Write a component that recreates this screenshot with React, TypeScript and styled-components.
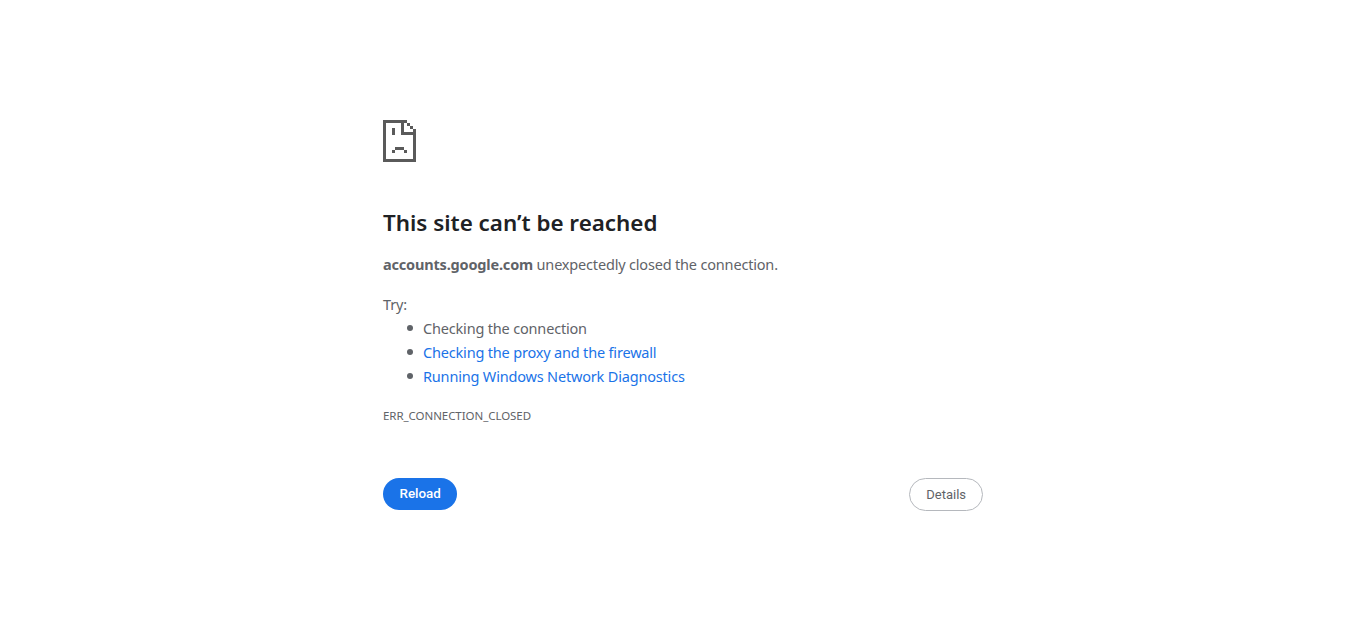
import React from "react";
import styled, { createGlobalStyle } from "styled-components";

const GlobalStyle = createGlobalStyle`
  html, body {
    margin: 0;
    padding: 0;
    background: #fff;
  }
`;

const Page = styled.div`
  box-sizing: border-box;
  width: 600px;
  margin: 0 auto;
  padding-top: 120px;
  font-family: "Noto Sans", "Open Sans", sans-serif;
  font-size: 14.5px;
  color: #5f6368;
`;

const FileIcon = styled.svg`
  display: block;
  width: 33px;
  height: 42px;
`;

const Title = styled.h1`
  margin: 47px 0 0;
  font-size: 22.4px;
  font-weight: 600;
  line-height: 28px;
  color: #202124;
`;

const Summary = styled.p`
  margin: 15px 0 0;
  line-height: 24px;
  letter-spacing: -0.18px;

  b {
    font-weight: 700;
  }
`;

const TryLabel = styled.p`
  margin: 16px 0 0;
  line-height: 24px;
  letter-spacing: -0.18px;
`;

const Suggestions = styled.ul`
  margin: 0;
  padding: 0 0 0 40px;
  list-style: none;
`;

const Suggestion = styled.li<{ $link?: boolean }>`
  position: relative;
  line-height: 24px;
  letter-spacing: -0.18px;
  color: ${(p) => (p.$link ? "#1a73e8" : "#5f6368")};

  &::before {
    content: "";
    position: absolute;
    left: -16px;
    top: 9px;
    width: 6px;
    height: 6px;
    border-radius: 50%;
    background: #5f6368;
  }
`;

const ErrorCode = styled.div`
  margin-top: 20px;
  font-size: 11.5px;
  line-height: 16px;
  letter-spacing: -0.06px;
`;

const Buttons = styled.div`
  display: flex;
  justify-content: space-between;
  align-items: flex-start;
  margin-top: 54px;
`;

const Button = styled.button`
  border-radius: 17px;
  font-family: Roboto, sans-serif;
`;

const ReloadButton = styled(Button)`
  height: 32px;
  padding: 0 16.5px 2px;
  border: 0;
  background: #1a73e8;
  color: #fff;
  font-size: 13.4px;
  font-weight: 500;
`;

const DetailsButton = styled(Button)`
  height: 33px;
  padding: 0 16px;
  border: 1px solid #b5b8bd;
  background: #fff;
  color: #5f6368;
  font-size: 13px;
  font-weight: 400;
`;

// pixel-art sad page, drawn on a 3px grid
function SadPage() {
  return (
    <FileIcon viewBox="0 0 33 42" fill="#5a5a5a" shapeRendering="crispEdges">
      <rect x="0" y="0" width="24" height="3" />
      <rect x="0" y="0" width="3" height="42" />
      <rect x="0" y="39" width="33" height="3" />
      <rect x="30" y="9" width="3" height="33" />
      <rect x="24" y="3" width="3" height="3" />
      <rect x="27" y="6" width="3" height="3" />
      <rect x="18" y="0" width="3" height="15" />
      <rect x="18" y="12" width="15" height="3" />
      <rect x="9" y="8" width="3" height="7" />
      <rect x="12" y="27" width="9" height="3" />
      <rect x="9" y="30" width="3" height="3" />
      <rect x="21" y="30" width="3" height="3" />
    </FileIcon>
  );
}

export default function App() {
  return (
    <Page>
      <GlobalStyle />
      <SadPage />
      <Title>This site can’t be reached</Title>
      <Summary>
        <b>accounts.google.com</b> unexpectedly closed the connection.
      </Summary>
      <TryLabel>Try:</TryLabel>
      <Suggestions>
        <Suggestion>Checking the connection</Suggestion>
        <Suggestion $link>Checking the proxy and the firewall</Suggestion>
        <Suggestion $link>Running Windows Network Diagnostics</Suggestion>
      </Suggestions>
      <ErrorCode>ERR_CONNECTION_CLOSED</ErrorCode>
      <Buttons>
        <ReloadButton>Reload</ReloadButton>
        <DetailsButton>Details</DetailsButton>
      </Buttons>
    </Page>
  );
}
